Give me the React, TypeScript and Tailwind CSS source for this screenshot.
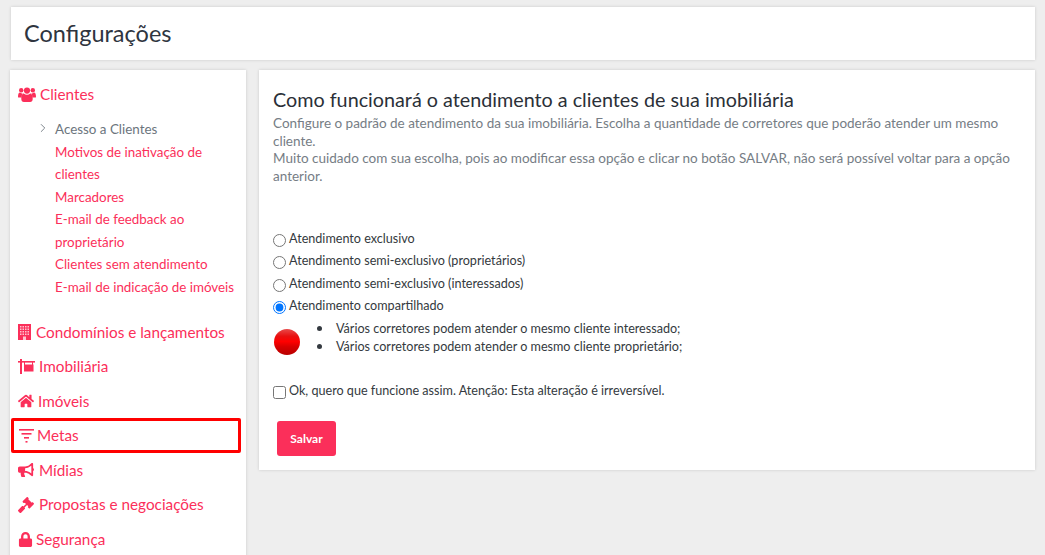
import { FaBullhorn, FaGavel, FaHome, FaLock } from 'react-icons/fa';
import { ChevronRight } from 'lucide-react';

const font = { fontFamily: 'Lato, sans-serif' };

function UsersIcon() {
  return (
    <svg width="18" height="15" viewBox="0 0 18 15" className="shrink-0" fill="currentColor">
      <circle cx="3.2" cy="3.2" r="2.2" />
      <circle cx="14.8" cy="3.2" r="2.2" />
      <circle cx="9" cy="3.6" r="3.1" />
      <path d="M0 10c0-3 .8-4.4 2-4.4.8.7 1.6 1 2.6 1-.6 1-.9 2.100-.9 3.900H1.200C.5 10.500 0 10.400 0 10z" />
      <path d="M18 10c0-3-.8-4.400-2-4.400-.8.7-1.600 1-2.600 1 .6 1 .9 2.100.9 3.900h2.500c.7 0 1.200-.1 1.200-.5z" />
      <path d="M5.800 6.600c.9.8 2 1.200 3.200 1.200s2.300-.4 3.200-1.200c1.300 0 2.500 1.500 2.500 5.400 0 1.800-1 3-2.600 3H5.900C4.300 15 3.300 13.800 3.300 12c0-3.900 1.200-5.400 2.500-5.400z" />
    </svg>
  );
}

function BuildingIcon() {
  return (
    <svg width="13" height="16" viewBox="0 0 13 16" className="shrink-0">
      <rect width="13" height="16" fill="currentColor" />
      <g fill="#ffc4d0">
        {[2, 4.500, 7, 9.500].map((x) =>
          [2, 4.500, 7, 9.500].map((y) => <rect key={`${x}-${y}`} x={x} y={y} width="1.500" height="1.500" />),
        )}
        <rect x="5" y="12.500" width="3" height="3.500" />
      </g>
    </svg>
  );
}

function SignIcon() {
  return (
    <svg width="17" height="15" viewBox="0 0 17 15" className="shrink-0" fill="currentColor">
      <rect x="2" y="0" width="2" height="15" />
      <rect x="0" y="2" width="17" height="1.600" />
      <rect x="6" y="3" width="1" height="3" />
      <rect x="14" y="3" width="1" height="3" />
      <rect x="6" y="5.500" width="9.500" height="7" />
    </svg>
  );
}

function GoalIcon() {
  return (
    <svg width="15" height="15" viewBox="0 0 15 15" className="shrink-0" fill="currentColor">
      <rect x="0" y="1" width="15" height="1.600" />
      <rect x="2.500" y="5" width="10" height="1.600" />
      <rect x="5" y="9" width="5" height="1.600" />
      <rect x="6.500" y="13" width="2" height="1.600" />
    </svg>
  );
}

const subItems = [
  'Motivos de inativação de clientes',
  'Marcadores',
  'E-mail de feedback ao proprietário',
  'Clientes sem atendimento',
  'E-mail de indicação de imóveis',
];

const radios = [
  { label: 'Atendimento exclusivo', checked: false },
  { label: 'Atendimento semi-exclusivo (proprietários)', checked: false },
  { label: 'Atendimento semi-exclusivo (interessados)', checked: false },
  { label: 'Atendimento compartilhado', checked: true },
];

function MenuItem({ icon, label, gap }: { icon: React.ReactNode; label: string; gap: string }) {
  return (
    <div className={`h-[34.5px] flex items-center text-[15.3px] text-[#fb2f5a] pl-[8px] ${gap}`}>
      {icon}
      <span>{label}</span>
    </div>
  );
}

export default function App() {
  return (
    <div style={font} className="h-[555px] overflow-hidden bg-[#eeeeee] px-[10px] pt-[7px]">
      {/* Header */}
      <div className="h-[53px] ml-[1px] w-[1024px] bg-white shadow-[0_0_3px_rgba(0,0,0,0.15)] flex items-center pl-[13px]">
        <h1 className="text-[23.5px] text-[#2f3540]">Configurações</h1>
      </div>

      <div className="flex items-start mt-[10px]">
        {/* Sidebar */}
        <aside className="w-[236px] h-[500px] shrink-0 bg-white shadow-[0_0_3px_rgba(0,0,0,0.15)]">
          <div className="flex items-center gap-[4px] pl-[8px] pt-[14px] h-[35px] text-[15.3px] text-[#fb2f5a]">
            <UsersIcon />
            <span>Clientes</span>
          </div>
          <ul className="pl-[45px] pr-[6px] mt-[13px] text-[13.4px] leading-[22.5px] text-[#fb2f5a]">
            <li className="relative text-[#6c757d]">
              <ChevronRight size={14} strokeWidth={1.5} className="absolute left-[-19px] top-[3px]" />
              Acesso a Clientes
            </li>
            {subItems.map((item) => (
              <li key={item}>{item}</li>
            ))}
          </ul>
          <div className="mt-[17px]">
            <MenuItem icon={<BuildingIcon />} label="Condomínios e lançamentos" gap="gap-[5px]" />
            <MenuItem icon={<SignIcon />} label="Imobiliária" gap="gap-[4px]" />
            <MenuItem icon={<FaHome size={16} />} label="Imóveis" gap="gap-[4px]" />
            <div className="h-[35px] -my-[0.25px] ml-[1px] mr-[5px] pl-[5px] flex items-center gap-[3px] border-[3px] border-[#ff0000] rounded-[2px] text-[15.3px] text-[#fb2f5a]">
              <GoalIcon />
              <span>Metas</span>
            </div>
            <MenuItem icon={<FaBullhorn size={16} />} label="Mídias" gap="gap-[5px]" />
            <MenuItem icon={<FaGavel size={16} />} label="Propostas e negociações" gap="gap-[5px]" />
            <MenuItem icon={<FaLock size={15} />} label="Segurança" gap="gap-[3px]" />
          </div>
        </aside>

        {/* Main */}
        <main className="w-[777px] h-[400px] ml-[13px] bg-white shadow-[0_0_3px_rgba(0,0,0,0.15)] px-[14px] pt-[17px]">
          <h2 className="text-[19.76px] leading-[24px] text-[#2b3038]">Como funcionará o atendimento a clientes de sua imobiliária</h2>
          <p className="text-[13.5px] leading-[17.5px] text-[#767d85] mt-[4px]">
            Configure o padrão de atendimento da sua imobiliária. Escolha a quantidade de corretores que poderão atender um mesmo cliente.
            <br />
            Muito cuidado com sua escolha, pois ao modificar essa opção e clicar no botão SALVAR, não será possível voltar para a opção anterior.
          </p>

          <div className="mt-[44.5px] text-[12.6px] text-[#343a40]">
            {radios.map((r) => (
              <label key={r.label} className="flex items-start h-[22.5px] leading-[18px]">
                <input type="radio" name="atendimento" defaultChecked={r.checked} className="w-[13px] h-[13px] mt-[4px] mr-[3px] ml-0" />
                {r.label}
              </label>
            ))}
          </div>

          <div className="flex items-start text-[12.6px] text-[#343a40]">
            <div className="w-[26px] h-[26px] mt-[9px] ml-[1px] shrink-0 rounded-full bg-[linear-gradient(180deg,#e84a4a_0%,#e81010_28%,#ff0000_48%,#d80000_68%,#b80000_100%)]" />
            <ul className="pl-[17px] leading-[18px]">
              <li className="flex items-center gap-[14px]">
                <span className="w-[5px] h-[5px] rounded-full bg-[#343a40]" />
                Vários corretores podem atender o mesmo cliente interessado;
              </li>
              <li className="flex items-center gap-[14px]">
                <span className="w-[5px] h-[5px] rounded-full bg-[#343a40]" />
                Vários corretores podem atender o mesmo cliente proprietário;
              </li>
            </ul>
          </div>

          <label className="flex items-start mt-[26.5px] text-[12.6px] leading-[18px] text-[#343a40]">
            <input type="checkbox" className="w-[13px] h-[13px] mt-[4px] mr-[3px] ml-0" />
            Ok, quero que funcione assim. Atenção: Esta alteração é irreversível.
          </label>

          <button className="block mt-[21px] ml-[4px] w-[59px] h-[35px] rounded-[3px] bg-[#fb2f5a] text-white text-[12px] font-bold">
            Salvar
          </button>
        </main>
      </div>
    </div>
  );
}
